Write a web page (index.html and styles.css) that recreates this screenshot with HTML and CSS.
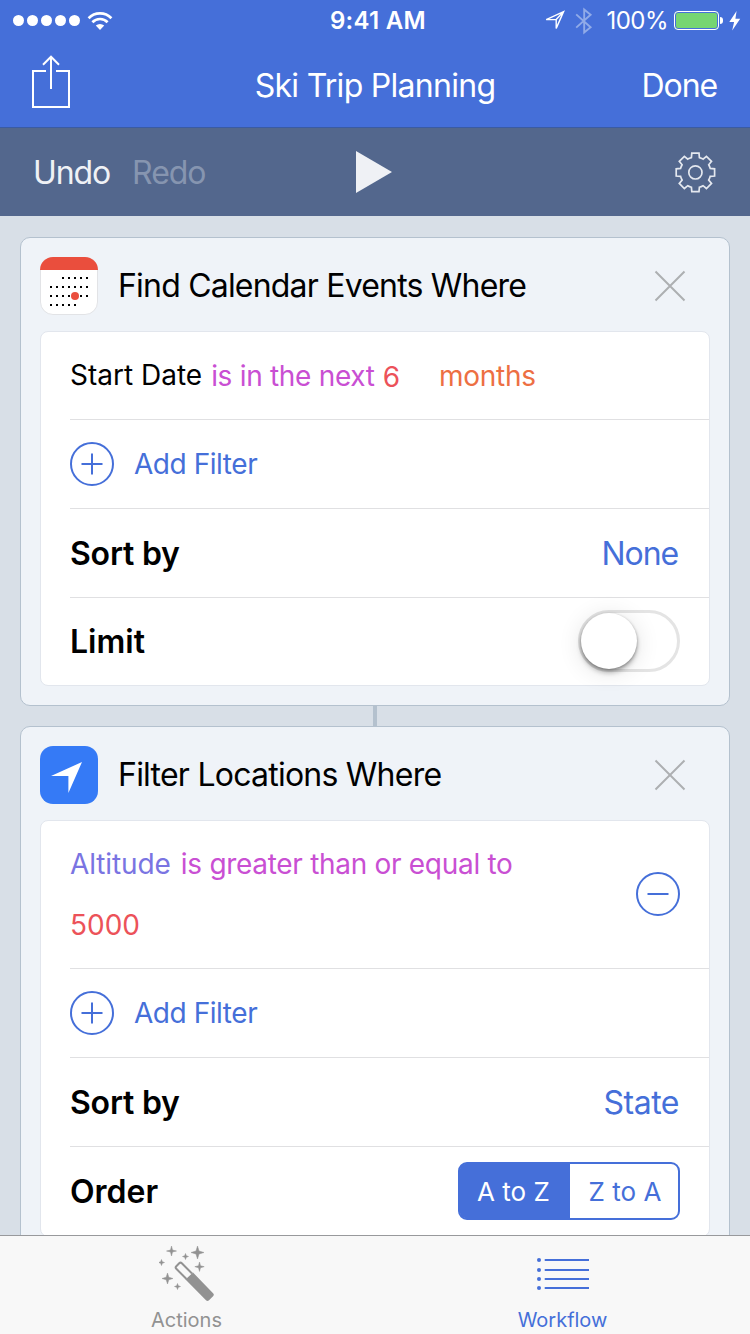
FILE: index.html
```html
<!DOCTYPE html>
<html lang="en">
<head>
<meta charset="utf-8">
<title>Ski Trip Planning</title>
<link rel="stylesheet" href="styles.css">
</head>
<body>
<div class="app">
  <header class="top">
    <div class="status">
      <div class="status-left">
        <i class="dot"></i><i class="dot"></i><i class="dot"></i><i class="dot"></i><i class="dot"></i>
        <svg class="wifi" width="26" height="20" viewBox="0 0 26 20" fill="none" stroke="#fff"><path d="M1.6 7.2a15.8 15.8 0 0 1 22.8 0" stroke-width="2.7"/><path d="M5.4 11.2a10.6 10.6 0 0 1 15.2 0" stroke-width="2.7"/><path d="M8.800 14.600a6 6 0 0 1 8.400 0L13 19z" fill="#fff" stroke="none"/></svg>
      </div>
      <span class="time">9:41 AM</span>
      <div class="status-right">
        <svg width="22" height="22" viewBox="0 0 22 22" fill="none" stroke="#fff" stroke-width="1.4"><path d="M2.2 9.6L19.6 1.6L12.2 18.4V9.6zM12.2 9.6L19.6 1.6"/></svg>
        <svg class="bluetooth" width="18" height="28" viewBox="0 0 18 28" fill="none" stroke="#91abe8" stroke-width="1.9"><path d="M1.2 7.4L15.6 20.2L9.2 25.4V2.6L15.6 7.8L1.2 20.6"/></svg>
        <span class="percent">100%</span>
        <span class="battery"></span><i class="battery-cap"></i>
        <svg class="bolt" width="12" height="20" viewBox="0 0 12 20" fill="#fff"><path d="M7.6 0L.3 11h4.8L3.2 19.6L11.2 7.8H6.4z"/></svg>
      </div>
    </div>
    <div class="nav">
      <svg class="share" width="40" height="54" viewBox="0 0 40 54" fill="none" stroke="#fff" stroke-width="2"><path d="M15 16H2v36h36V16H25M20 34V2M12 9.7L20 1.7l8 8"/></svg>
      <h1 class="title">Ski Trip Planning</h1>
      <span class="done">Done</span>
    </div>
  </header>
  <div class="toolbar">
    <div class="history"><span class="undo">Undo</span><span class="redo">Redo</span></div>
    <svg class="play" width="36" height="42" viewBox="0 0 36 42" fill="#eff1f5"><path d="M0 0L36 21L0 42z"/></svg>
    <svg class="gear" width="42" height="42" viewBox="-21.4 -21.4 42 42" fill="none" stroke="#e4e8ef" stroke-width="1.7"><circle r="6.6"/><path d="M-4-14.8L-3.6-19.2H3.6L4-14.8A15.3 15.3 0 0 1 7.64-13.3L11.03-16.12L16.12-11.03L13.3-7.64A15.3 15.3 0 0 1 14.8-4L19.2-3.6V3.6L14.8 4A15.3 15.3 0 0 1 13.3 7.64L16.12 11.03L11.03 16.12L7.64 13.3A15.3 15.3 0 0 1 4 14.8L3.6 19.2H-3.6L-4 14.8A15.3 15.3 0 0 1-7.64 13.3L-11.03 16.12L-16.12 11.03L-13.3 7.64A15.3 15.3 0 0 1-14.8 4L-19.2 3.6V-3.6L-14.8-4A15.3 15.3 0 0 1-13.3-7.64L-16.12-11.03L-11.03-16.12L-7.64-13.3A15.3 15.3 0 0 1-4-14.8z"/></svg>
  </div>

  <main class="canvas">
    <section class="card">
      <div class="card-head">
        <svg class="app-icon" width="58" height="58" viewBox="0 0 58 58"><rect x=".5" y=".5" width="57" height="57" rx="12.5" fill="#fff" stroke="#e2e3e6"/><path d="M0 13A13 13 0 0 1 13 0H45A13 13 0 0 1 58 13z" fill="#ea4e3d"/><path d="M22 21h28M10 30h40M10 39h40M10 48h28" stroke="#000" stroke-width="2" stroke-dasharray="2 4"/><circle cx="35" cy="39" r="4" fill="#ea4e3d"/></svg>
        <h2 class="card-title find">Find Calendar Events Where</h2>
        <svg class="close" width="32" height="32" viewBox="0 0 32 32" stroke="#adafb2" stroke-width="2"><path d="M1.5 1.5l29 29M30.5 1.5l-29 29"/></svg>
      </div>
      <div class="panel">
        <div class="row filter"><span class="start-date">Start Date</span><span class="op next">is in the next</span><span class="value six">6</span><span class="unit">months</span></div>
        <div class="row"><svg width="44" height="44" viewBox="0 0 44 44" fill="none" stroke="#456fd9" stroke-width="2"><circle cx="22" cy="22" r="21"/><path d="M11.5 22h21M22 11.5v21"/></svg><span class="add">Add Filter</span></div>
        <div class="row"><b class="label sort">Sort by</b><span class="choice none">None</span></div>
        <div class="row last"><b class="label limit">Limit</b><span class="switch"><i class="knob"></i></span></div>
      </div>
    </section>
    <div class="connector"></div>
    <section class="card">
      <div class="card-head">
        <svg class="app-icon" width="58" height="58" viewBox="0 0 58 58"><rect width="58" height="58" rx="13" fill="#357af6"/><path d="M11 30L42 16L28.4 47V30z" fill="#fff"/></svg>
        <h2 class="card-title locations">Filter Locations Where</h2>
        <svg class="close" width="32" height="32" viewBox="0 0 32 32" stroke="#adafb2" stroke-width="2"><path d="M1.5 1.5l29 29M30.5 1.5l-29 29"/></svg>
      </div>
      <div class="panel">
        <div class="row tall">
          <div class="condition">
            <div class="line"><span class="field">Altitude</span><span class="op greater">is greater than or equal to</span></div>
            <div class="line"><span class="value amount">5000</span></div>
          </div>
          <svg class="minus" width="44" height="44" viewBox="0 0 44 44" fill="none" stroke="#456fd9" stroke-width="2"><circle cx="22" cy="22" r="21"/><path d="M11.5 22h21"/></svg>
        </div>
        <div class="row"><svg width="44" height="44" viewBox="0 0 44 44" fill="none" stroke="#456fd9" stroke-width="2"><circle cx="22" cy="22" r="21"/><path d="M11.5 22h21M22 11.5v21"/></svg><span class="add">Add Filter</span></div>
        <div class="row"><b class="label sort">Sort by</b><span class="choice state">State</span></div>
        <div class="row"><b class="label order">Order</b><div class="segmented"><span class="seg on">A to Z</span><span class="seg off">Z to A</span></div></div>
      </div>
    </section>
  </main>

  <nav class="tabs">
    <div class="tab wand">
      <svg width="56" height="57" viewBox="0 0 56 57" fill="#929292"><path d="M12.5 0l1 4 4 1-4 1-1 4-1-4-4-1 4-1zM38.5 0l1.5 5 5 1.5-5 1.5-1.500 5-1.500-5-5-1.500 5-1.500zM26.500 7.500l.8 2.200 2.200.8-2.200.8-.8 2.200-.8-2.200-2.200-.8 2.200-.8zM2.500 13.500l.8 2.200 2.200.8-2.200.8-.8 2.200-.8-2.200-2.200-.8 2.200-.8zM40.500 16l1 3.700 3.700 1-3.700 1-1 3.700-1-3.700-3.700-1 3.700-1zM8.500 27l1.300 4.200 4.200 1.300-4.200 1.300-1.300 4.200-1.300-4.200-4.200-1.300 4.200-1.300zM18.500 37.500l.8 2.200 2.200.8-2.200.8-.8 2.200-.8-2.200-2.200-.8 2.200-.8z" stroke="#929292" stroke-width=".5"/><path d="M27.500 33L17.300 22.800Q16 21.500 17.300 20.200L20.200 17.300Q21.500 16 22.800 17.300L33 27.500" fill="none" stroke="#929292" stroke-width="2"/><path d="M26.500 33.500L34 26.500L54.300 47.500Q55.500 48.800 54.300 50L50 54.300Q48.500 55.800 47 54.300z"/></svg>
      <span class="tab-label actions">Actions</span>
    </div>
    <div class="tab current">
      <svg class="list" width="52" height="32" viewBox="0 0 52 32" stroke="#456fd9" fill="#456fd9"><path d="M8.500 2H51.500M8.500 12H51.500M8.500 21H51.500M8.500 30H51.500" stroke-width="2" stroke-linecap="round"/><g stroke="none"><circle cx="2" cy="2" r="2"/><circle cx="2" cy="12" r="2"/><circle cx="2" cy="21" r="2"/><circle cx="2" cy="30" r="2"/></g></svg>
      <span class="tab-label workflow">Workflow</span>
    </div>
  </nav>
</div>
</body>
</html>
```

FILE: styles.css
```css
* { box-sizing: border-box; }
body { margin: 0; font-family: Inter, "Liberation Sans", sans-serif; color: #000; }
svg { display: block; flex: none; }
h1, h2 { margin: 0; font-weight: 400; }
.app { width: 750px; height: 1334px; display: flex; flex-direction: column; overflow: hidden; background: #d8dfe7; white-space: nowrap; }

.top { height: 128px; flex: none; background: #456fd9; border-bottom: 1px solid #3a5ba3; color: #fff; }
.status { height: 41px; display: grid; grid-template-columns: 1fr auto 1fr; align-items: center; padding: 0 10px 0 13px; }
.status-left, .status-right { display: flex; align-items: center; }
.status-right { justify-content: flex-end; }
.dot { width: 11px; height: 11px; border-radius: 50%; background: #fff; margin-right: 3px; }
.wifi { margin-left: 4px; }
.time { font-size: 24px; font-weight: 600; letter-spacing: .3px; margin-left: 3px; }
.bluetooth { margin: 0 13px 0 9px; }
.percent { font-size: 24px; letter-spacing: -.5px; }
.battery { width: 45px; height: 19px; margin-left: 6px; border: 1px solid #fff; border-radius: 4px; background: #76d572; box-shadow: inset 0 0 0 1px #456fd9; }
.battery-cap { width: 3px; height: 7px; margin-left: 1px; border-radius: 0 3px 3px 0; background: #fff; }
.bolt { margin-left: 6px; margin-right: -1px; }
.nav { height: 87px; display: grid; grid-template-columns: 1fr auto 1fr; align-items: center; padding: 0 33px 0 31px; font-size: 32px; }
.share { margin-top: -6px; }
.title { font-size: 32px; letter-spacing: -.72px; margin-left: 2px; padding-top: 1px; }
.done { justify-self: end; letter-spacing: -1.1px; padding-top: 1px; }

.toolbar { height: 88px; flex: none; display: grid; grid-template-columns: 1fr auto 1fr; align-items: center; padding: 0 34px 0 33px; background: #53678d; color: #eff1f5; font-size: 32px; }
.history { display: flex; gap: 22px; letter-spacing: -1.1px; }
.redo { color: #8695b0; }
.play { margin-left: -1px; }
.gear { justify-self: end; }

.canvas { flex: 1; min-height: 0; overflow: hidden; padding: 21px 20px 0; }
.card { border: 1px solid #b4c1ce; border-radius: 10px; background: #eff3f8; padding: 0 19px 19px; }
.card-head { height: 93px; display: flex; align-items: center; padding-top: 3px; padding-bottom: 1px; }
.card-title { flex: 1; margin-left: 20px; font-size: 32px; }
.find { letter-spacing: -.8px; }
.locations { letter-spacing: -.76px; }
.close { margin-right: 24px; }
.panel { border: 1px solid #e2e6ed; border-radius: 8px; background: #fff; padding-left: 29px; }
.row { height: 89px; display: flex; align-items: center; border-bottom: 1px solid #e0e0e2; padding-right: 29px; }
.row.filter { height: 88px; padding-right: 0; }
.row.last { height: 87px; border-bottom: 0; }
.row.tall { height: 148px; }
.row .label { flex: 1; font-size: 32px; font-weight: 600; }
.row .sort { letter-spacing: -.2px; }
.filter, .condition, .add { font-size: 28px; }
.start-date { padding-bottom: 2px; }
.op { color: #c94fd3; letter-spacing: -.3px; }
.value { color: #ec5259; }
.unit { color: #ed6f43; margin-left: 39px; letter-spacing: -.3px; }
.next { margin-left: 9px; }
.six { margin-left: 8px; padding-top: 2px; }
.field { color: #7a74e2; letter-spacing: -.1px; }
.add { color: #456fd9; margin-left: 20px; letter-spacing: -.45px; }
.choice { color: #456fd9; font-size: 32px; }
.none { letter-spacing: -1.1px; margin-right: 2px; }
.state { letter-spacing: -.5px; margin-right: 1px; }
.condition { flex: 1; }
.minus { margin-top: -1px; }
.line { height: 61px; display: flex; align-items: center; }
.greater { margin-left: 10px; }
.switch { width: 102px; height: 62px; margin-top: -2px; border: 3px solid #e4e4e4; border-radius: 31px; }
.knob { display: block; width: 56px; height: 56px; border-radius: 50%; background: #fff; box-shadow: 0 4px 5px rgba(0,0,0,.25), 0 1px 3px rgba(0,0,0,.3), 0 3px 24px rgba(0,0,0,.12); }
.connector { width: 4px; height: 20px; margin: 0 auto; background: #b4c1ce; }
.segmented { width: 222px; height: 58px; display: flex; border: 2px solid #456fd9; border-radius: 9px; font-size: 26px; background: #fff; }
.seg { display: flex; align-items: center; justify-content: center; color: #456fd9; }
.seg.on { width: 110px; padding-right: 3px; background: #456fd9; color: #fff; border-radius: 5px 0 0 5px; }
.seg.off { flex: 1; padding-left: 2px; }

.tabs { height: 99px; flex: none; display: grid; grid-template-columns: 1fr 1fr; background: #f8f8f8; border-top: 1px solid #98999c; color: #929292; }
.tab { display: flex; flex-direction: column; align-items: center; padding-top: 10px; }
.wand { padding-right: 2px; }
.tab-label { font-size: 20px; line-height: 24px; margin-top: 5px; }
.current { color: #456fd9; padding-top: 22px; }
.list { margin-bottom: 13px; }
```
